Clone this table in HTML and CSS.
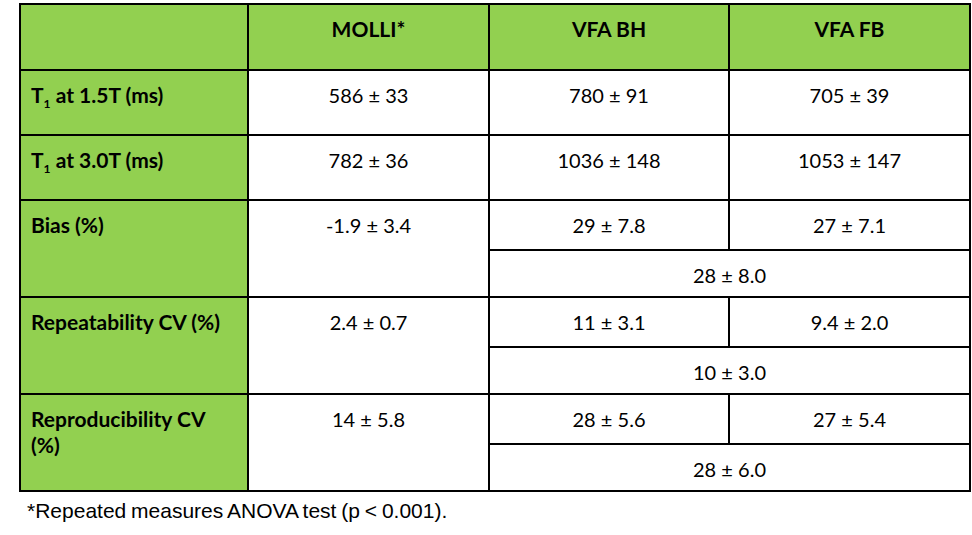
FILE: index.html
```html
<!DOCTYPE html>
<html lang="en">
<head>
  <meta charset="UTF-8" />
  <meta name="viewport" content="width=device-width, initial-scale=1.0" />
  <title>T1 comparison</title>
  <link rel="stylesheet" href="styles.css">
</head>
<body>
  <table class="results">
    <colgroup>
      <col class="c-label">
      <col class="c-molli">
      <col class="c-bh">
      <col class="c-fb">
    </colgroup>
    <tr class="head">
      <th></th>
      <th>MOLLI*</th>
      <th>VFA BH</th>
      <th>VFA FB</th>
    </tr>
    <tr class="single">
      <th class="label">T<sub>1</sub> at 1.5T (ms)</th>
      <td>586 ± 33</td>
      <td>780 ± 91</td>
      <td>705 ± 39</td>
    </tr>
    <tr class="single">
      <th class="label">T<sub>1</sub> at 3.0T (ms)</th>
      <td>782 ± 36</td>
      <td>1036 ± 148</td>
      <td>1053 ± 147</td>
    </tr>
    <tr class="top">
      <th class="label" rowspan="2">Bias (%)</th>
      <td rowspan="2">-1.9 ± 3.4</td>
      <td>29 ± 7.8</td>
      <td>27 ± 7.1</td>
    </tr>
    <tr class="bottom">
      <td colspan="2">28 ± 8.0</td>
    </tr>
    <tr class="top">
      <th class="label" rowspan="2">Repeatability CV (%)</th>
      <td rowspan="2">2.4 ± 0.7</td>
      <td>11 ± 3.1</td>
      <td>9.4 ± 2.0</td>
    </tr>
    <tr class="bottom">
      <td colspan="2">10 ± 3.0</td>
    </tr>
    <tr class="top">
      <th class="label" rowspan="2">Reproducibility CV (%)</th>
      <td rowspan="2">14 ± 5.8</td>
      <td>28 ± 5.6</td>
      <td>27 ± 5.4</td>
    </tr>
    <tr class="bottom">
      <td colspan="2">28 ± 6.0</td>
    </tr>
  </table>
  <p class="note">*Repeated measures ANOVA test (p &lt; 0.001).</p>
</body>
</html>
```

FILE: styles.css
```css
body {
  margin: 0;
  padding: 3px 4px 0 19px;
  background: #fff;
  color: #000;
  font-family: Lato, "Open Sans", sans-serif;
}
.results {
  border-collapse: collapse;
  table-layout: fixed;
  width: 950px;
  font-size: 20px;
}
.c-label { width: 228px; }
.c-molli { width: 241px; }
.c-bh { width: 240px; }
.c-fb { width: 241px; }
.results th,
.results td {
  border: 2px solid #000;
  padding: 12px 10px 0;
  line-height: 24px;
  vertical-align: top;
  text-align: center;
  font-weight: normal;
}
.results .head th {
  background: #92d050;
  font-weight: bold;
  font-size: 21px;
  height: 52px;
}
.results th.label {
  background: #92d050;
  font-weight: bold;
  font-size: 21px;
  line-height: 26px;
  padding-top: 11px;
  text-align: left;
}
.single th,
.single td { height: 51px; }
.top th,
.top td { height: 36px; }
.bottom td { height: 33px; }
sub {
  font-size: 12px;
  vertical-align: -5px;
  line-height: 0;
}
.note {
  margin: 7px 0 0 8px;
  font-family: "Liberation Sans", Arial, sans-serif;
  font-size: 21px;
  word-spacing: -1px;
}
```
